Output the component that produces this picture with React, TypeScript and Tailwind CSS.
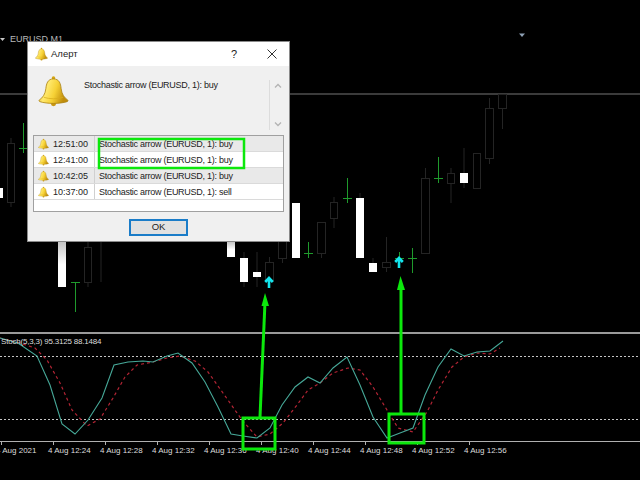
const hollow: [number, number, number, number, number, number][] = [
  [7, 15, 143, 202, 138, 207],
  [84, 92, 247, 282, 242, 287],
  [265, 274, 262, 281, 257, 287],
  [278, 287, 230, 258, 225, 263],
  [317, 326, 222, 253, 222, 258],
  [330, 338, 202, 218, 197, 228],
  [382, 391, 262, 267, 237, 272],
  [421, 430, 178, 253, 168, 253],
  [447, 455, 173, 183, 168, 203],
  [473, 481, 153, 188, 153, 188],
  [485, 494, 108, 158, 98, 164],
  [498, 507, 94, 108, 94, 129],
];

const white: [number, number, number, number, number, number][] = [
  [0, 3, 188, 198, 188, 198],
  [58, 66, 242, 287, 242, 287],
  [227, 235, 242, 257, 242, 257],
  [240, 248, 258, 282, 252, 287],
  [253, 261, 272, 277, 252, 287],
  [292, 300, 203, 258, 203, 258],
  [356, 364, 198, 258, 193, 258],
  [369, 377, 263, 272, 258, 272],
  [460, 468, 173, 183, 148, 188],
];

const dojis: [number, number, number, number][] = [
  [23, 123, 153, 148],
  [75, 282, 312, 282],
  [308, 242, 258, 253],
  [347, 178, 203, 198],
  [399, 252, 268, 258],
  [412, 248, 273, 258],
  [438, 157, 183, 178],
];

const teal =
  "0,338 18,343 37,356 50,385 62,424 75,434 88,420 102,398 114,365 128,362 143,361 153,362 167,356 178,353 192,363 205,382 218,407 231,434 243,436 257,438 270,428 282,405 295,387 308,377 320,383 333,368 347,357 360,385 373,417 387,438 400,433 413,428 425,395 438,367 451,349 464,356 477,352 490,351 503,341";
const red =
  "0,338 20,343 35,348 47,360 60,383 72,410 87,426 100,419 113,398 125,377 137,365 153,362 167,358 180,356 195,361 208,372 223,393 242,420 257,437 270,434 283,423 297,405 308,390 320,383 333,373 348,368 360,370 373,387 387,410 398,428 413,432 427,412 438,390 452,367 464,357 477,353 490,354 500,348";

const labels = [
  "4 Aug 2021",
  "4 Aug 12:24",
  "4 Aug 12:28",
  "4 Aug 12:32",
  "4 Aug 12:36",
  "4 Aug 12:40",
  "4 Aug 12:44",
  "4 Aug 12:48",
  "4 Aug 12:52",
  "4 Aug 12:56",
];

const rows = [
  ["12:51:00", "Stochastic arrow (EURUSD, 1): buy", "bg-[#e9e9e9]"],
  ["12:41:00", "Stochastic arrow (EURUSD, 1): buy", "bg-white"],
  ["10:42:05", "Stochastic arrow (EURUSD, 1): buy", "bg-[#e9e9e9]"],
  ["10:37:00", "Stochastic arrow (EURUSD, 1): sell", "bg-white"],
];

function Bell({ id, className }: { id: string; className: string }) {
  return (
    <svg viewBox="0 0 32 32" className={className}>
      <defs>
        <linearGradient id={id} x1="0" x2="1" y1="0" y2="0.3">
          <stop offset="0" stopColor="#c9980f" />
          <stop offset="0.35" stopColor="#ffe96e" />
          <stop offset="0.65" stopColor="#f6d135" />
          <stop offset="1" stopColor="#c08d0c" />
        </linearGradient>
      </defs>
      <circle cx="16" cy="2.6" r="1.8" fill="#d4a514" />
      <ellipse cx="16" cy="29.5" rx="2.6" ry="2.2" fill="#c9960f" />
      <path
        d="M16 3.5C10 3.5 8.6 8.5 8.1 13.5 7.6 18.8 5 23 1.4 25.2.9 25.8 1 26.6 2 27c7 2.4 21 2.4 28 0 1-.4 1.1-1.2.6-1.8C27 23 24.400 18.800 23.900 13.500 23.400 8.500 22 3.500 16 3.500Z"
        fill={`url(#${id})`}
        stroke="#a9800f"
        strokeWidth="0.8"
      />
      <path d="M6 22.500C12 24.500 20 24.500 26 22.500" fill="none" stroke="#d9ae1c" strokeWidth="0.8" />
    </svg>
  );
}

function CyanArrow({ x, y }: { x: number; y: number }) {
  return (
    <g stroke="#14e6ee" fill="none">
      <path d={`M${x - 3.8} ${y + 5}L${x} ${y + 1}L${x + 3.800} ${y + 5}`} strokeWidth="2.6" />
      <path d={`M${x} ${y + 1}V${y + 11}`} strokeWidth="2.6" />
    </g>
  );
}

export default function App() {
  return (
    <div className="relative flex h-[480px] w-[640px] flex-col overflow-hidden bg-black font-['Liberation_Sans',sans-serif]">
      <div className="relative h-[332px] shrink-0">
        <svg viewBox="0 0 640 332" className="h-[332px] w-[640px]">
          <defs>
            <linearGradient id="fade" x1="0" x2="0" y1="0" y2="1">
              <stop offset="0" stopColor="#c4c4c4" />
              <stop offset="0.5" stopColor="#ffffff" />
            </linearGradient>
          </defs>
          <line x1="0" x2="640" y1="94" y2="94" stroke="#4f4f4f" strokeWidth="1.500" />
          {hollow.map(([a, b, t, u, w1, w2], i) => (
            <g key={i} stroke="#242424" fill="black">
              <line x1={(a + b) / 2} x2={(a + b) / 2} y1={w1} y2={w2} />
              <rect x={a + 0.5} y={t + 0.5} width={b - a - 1} height={u - t} />
            </g>
          ))}
          <line x1="101" x2="101" y1="242" y2="282" stroke="#242424" />
          {white.map(([a, b, t, u, w1, w2], i) => (
            <g key={i}>
              <line x1={(a + b) / 2} x2={(a + b) / 2} y1={w1} y2={w2} stroke="#242424" />
              <rect x={a} y={t} width={b - a} height={u - t} fill={t === 242 ? "url(#fade)" : "#ffffff"} />
            </g>
          ))}
          {dojis.map(([x, t, b, m], i) => (
            <g key={i} stroke="#1f9a2c">
              <line x1={x + 0.5} x2={x + 0.5} y1={t} y2={b} />
              <line x1={x - 4} x2={x + 5} y1={m + 0.5} y2={m + 0.5} />
            </g>
          ))}
          <CyanArrow x={269} y={277} />
          <CyanArrow x={399} y={257} />
          <path d="M519 33.500H525L522 37Z" fill="#8ea0b4" />
          <path d="M0 38H5L2.500 41Z" fill="#c8c8c8" />
        </svg>
        <span className="absolute left-[10px] top-[33px] text-[9px] leading-[13px] text-[#b8b8b8]">EURUSD,M1</span>
      </div>

      <div className="h-[2px] shrink-0 bg-[#9a9a9a]" />

      <div className="relative h-[107px] shrink-0">
        <svg viewBox="0 334 640 107" className="h-[107px] w-[640px]">
          <line x1="0" x2="640" y1="356.500" y2="356.500" stroke="#c4c4c4" strokeDasharray="2 2" />
          <line x1="0" x2="640" y1="419.500" y2="419.500" stroke="#c4c4c4" strokeDasharray="2 2" />
          <polyline points={red} fill="none" stroke="#b32434" strokeWidth="1.200" strokeDasharray="3 3" />
          <polyline points={teal} fill="none" stroke="#46a898" strokeWidth="1.100" />
        </svg>
        <span className="absolute left-[1px] top-[1px] whitespace-nowrap text-[8px] leading-[13px] tracking-[-0.2px] text-[#dcdcdc]">
          Stoch(5,3,3) 95.3125 88.1484
        </span>
      </div>

      <div className="h-[1px] shrink-0 bg-[#b0b0b0]" />
      <div className="-ml-[4px] flex pt-[1px]">
        {labels.map((l) => (
          <div key={l} className="relative w-[52px] shrink-0 whitespace-nowrap pt-[1px] text-[8px] leading-[13px] text-[#dcdcdc]">
            {l}
            <div className="absolute -top-[1px] left-[5px] h-[3px] w-[1px] bg-[#b0b0b0]" />
          </div>
        ))}
      </div>

      <div className="absolute left-[27px] top-[41px] flex h-[201px] w-[263px] flex-col border border-[#8a8a8a] bg-[#f0f0f0] text-[#222]">
        <div className="flex h-[24px] shrink-0 items-center bg-white pl-[7px] pr-[12px]">
          <Bell id="b1" className="h-[14px] w-[13px]" />
          <span className="ml-[3px] text-[9.500px] leading-[14px] text-[#222]">Алерт</span>
          <span className="ml-auto text-[11px] leading-[14px] text-[#222]">?</span>
          <svg viewBox="0 0 10 10" className="ml-[30px] h-[10px] w-[10px]" fill="none" stroke="#333" strokeWidth="1">
            <path d="M.5.5l9 9M9.500.5l-9 9" />
          </svg>
        </div>
        <div className="flex h-[69px] shrink-0">
          <Bell id="b2" className="ml-[10px] mt-[9px] h-[32px] w-[31px]" />
          <p className="ml-[15px] mt-[12px] w-[185px] text-[9px] leading-[14px] tracking-[-0.27px] text-[#222]">
            Stochastic arrow (EURUSD, 1): buy
          </p>
          <div className="mt-[14px] flex h-[50px] w-[14px] flex-col items-center justify-between border-l border-[#dcdcdc] py-[3px] pl-[3px]">
            <svg viewBox="0 0 8 5" className="h-[5px] w-[8px]" fill="none" stroke="#b4b4b4" strokeWidth="1.300">
              <path d="M1 4.500l3-3 3 3" />
            </svg>
            <svg viewBox="0 0 8 5" className="h-[5px] w-[8px]" fill="none" stroke="#b4b4b4" strokeWidth="1.300">
              <path d="M1 .5l3 3 3-3" />
            </svg>
          </div>
        </div>
        <div className="mx-[5px] h-[77px] shrink-0 border border-[#a0a0a0] bg-white">
          {rows.map(([t, m, bg]) => (
            <div key={t} className={`flex h-[16px] items-center border-b border-[#dadada] ${bg}`}>
              <div className="flex h-full w-[61px] shrink-0 items-center border-r border-[#d0d0d0] pl-[4px]">
                <Bell id={`r${t.replace(/:/g, "")}`} className="h-[12px] w-[11px]" />
                <span className="ml-[4px] text-[9px] leading-[14px] text-[#222]">{t}</span>
              </div>
              <span className="ml-[4px] whitespace-nowrap text-[9px] leading-[14px] tracking-[-0.27px] text-[#222]">{m}</span>
            </div>
          ))}
        </div>
        <div className="flex flex-1 justify-center pt-[7px]">
          <div className="flex h-[17px] w-[59px] items-center justify-center border-2 border-[#1a7cc8] bg-[#e1e1e1] text-[9.500px] text-[#222]">
            OK
          </div>
        </div>
      </div>

      <svg viewBox="0 0 640 480" className="pointer-events-none absolute inset-0 h-[480px] w-[640px]" fill="none" stroke="#0ce80c" strokeWidth="3">
        <rect x="99" y="139" width="145" height="29" strokeWidth="2.500" />
        <rect x="243" y="418" width="32" height="31" />
        <rect x="389" y="414" width="35" height="29" />
        <path d="M260 417L265 302" />
        <path d="M401 414V286" />
        <path d="M265 293L269 306H261.500Z" fill="#0ce80c" stroke="none" />
        <path d="M400.500 276L405 290H397Z" fill="#0ce80c" stroke="none" />
      </svg>
    </div>
  );
}
